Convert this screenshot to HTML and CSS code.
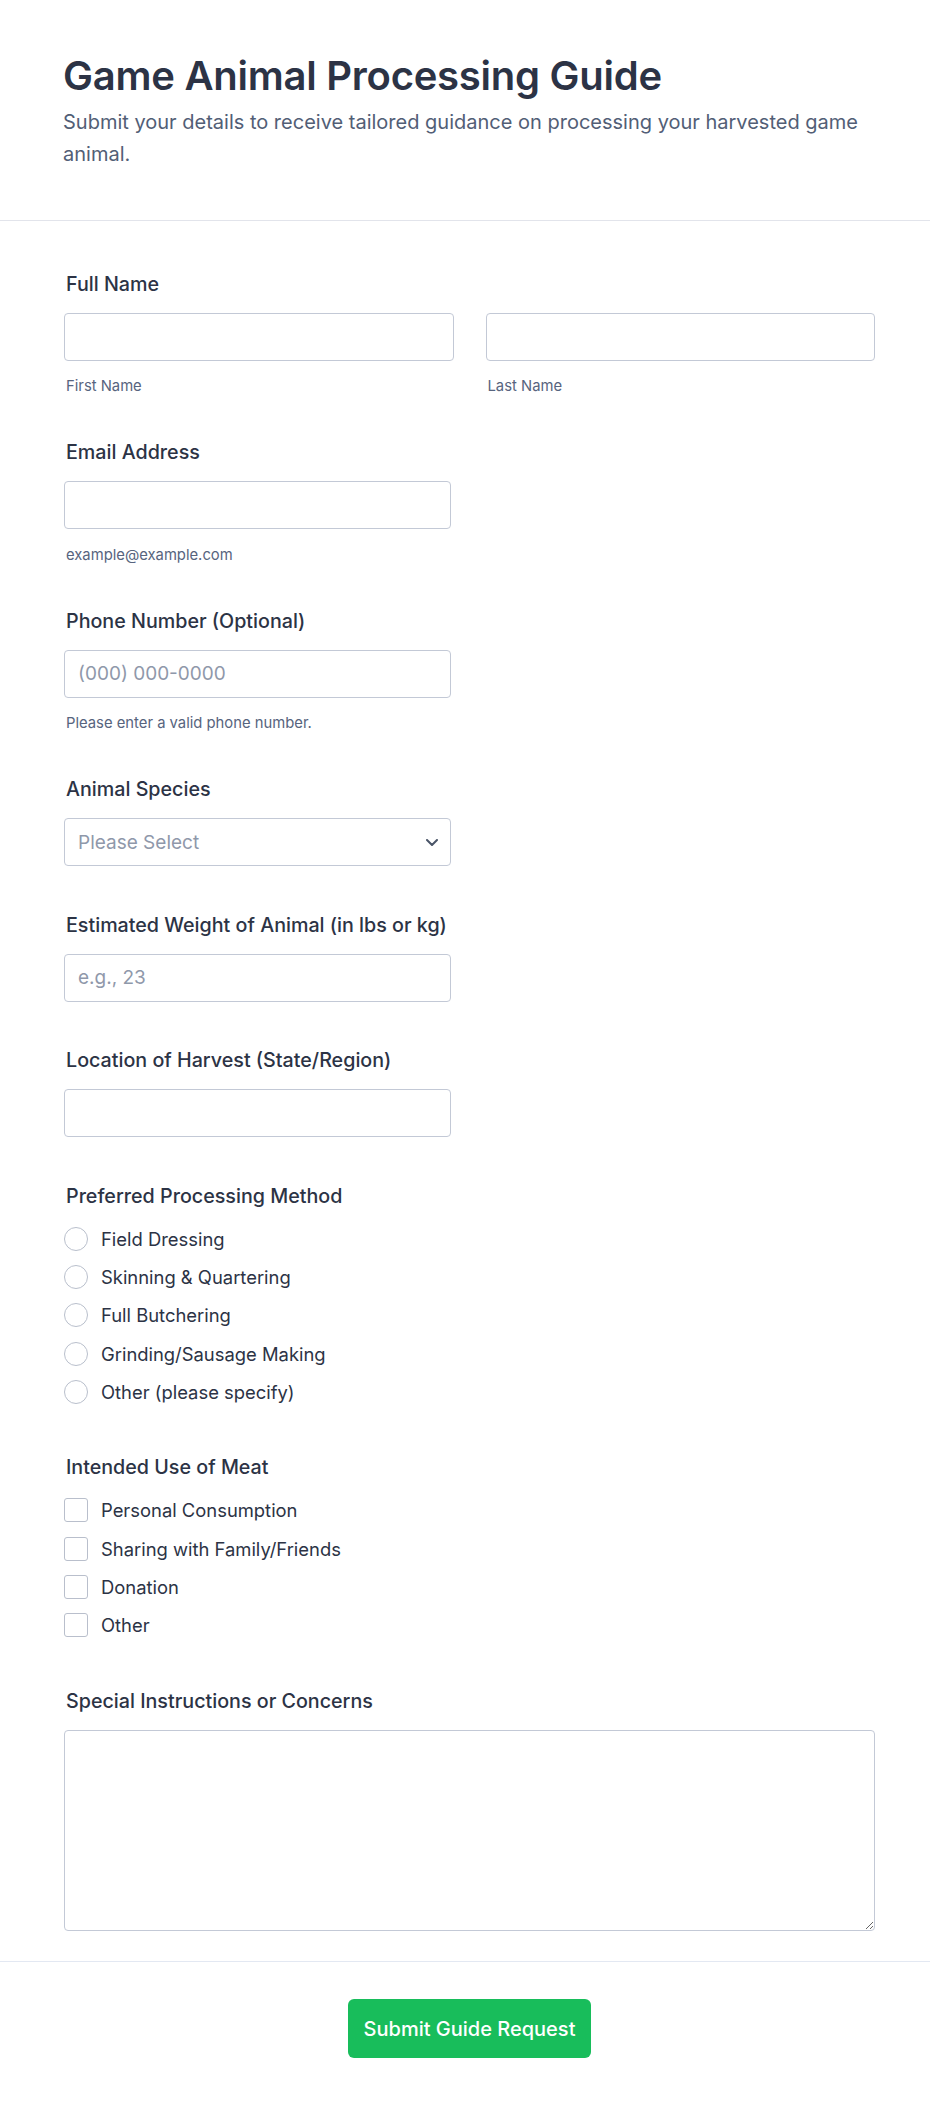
FILE: index.html
```html
<!DOCTYPE html>
<html lang="en">
<head>
<meta charset="utf-8">
<title>Game Animal Processing Guide</title>
<link rel="stylesheet" href="styles.css">
</head>
<body>
<header class="form-header">
  <h1 class="form-title">Game Animal Processing Guide</h1>
  <p class="form-desc">Submit your details to receive tailored guidance on processing your harvested game animal.</p>
</header>
<main class="form-body">
  <div class="field">
    <label class="field-label">Full Name</label>
    <div class="name-row">
      <div class="name-col">
        <input class="text-input" type="text">
        <span class="sublabel">First Name</span>
      </div>
      <div class="name-col">
        <input class="text-input" type="text">
        <span class="sublabel">Last Name</span>
      </div>
    </div>
  </div>
  <div class="field">
    <label class="field-label">Email Address</label>
    <input class="text-input half" type="email">
    <span class="sublabel">example@example.com</span>
  </div>
  <div class="field">
    <label class="field-label">Phone Number (Optional)</label>
    <input class="text-input half" type="tel" placeholder="(000) 000-0000">
    <span class="sublabel">Please enter a valid phone number.</span>
  </div>
  <div class="field">
    <label class="field-label">Animal Species</label>
    <div class="select-wrap half">
      <select class="select-input">
        <option>Please Select</option>
      </select>
      <svg class="chevron" width="12" height="7" viewBox="0 0 12 7" aria-hidden="true"><path d="M1 1 L6 6 L11 1" fill="none" stroke="#4a5568" stroke-width="2" stroke-linecap="round" stroke-linejoin="round"/></svg>
    </div>
  </div>
  <div class="field">
    <label class="field-label">Estimated Weight of Animal (in lbs or kg)</label>
    <input class="text-input half" type="text" placeholder="e.g., 23">
  </div>
  <div class="field">
    <label class="field-label">Location of Harvest (State/Region)</label>
    <input class="text-input half" type="text">
  </div>
  <div class="field">
    <label class="field-label">Preferred Processing Method</label>
    <div class="options">
      <label class="option"><input class="radio" type="radio" name="method"><span>Field Dressing</span></label>
      <label class="option"><input class="radio" type="radio" name="method"><span>Skinning &amp; Quartering</span></label>
      <label class="option"><input class="radio" type="radio" name="method"><span>Full Butchering</span></label>
      <label class="option"><input class="radio" type="radio" name="method"><span>Grinding/Sausage Making</span></label>
      <label class="option"><input class="radio" type="radio" name="method"><span>Other (please specify)</span></label>
    </div>
  </div>
  <div class="field">
    <label class="field-label">Intended Use of Meat</label>
    <div class="options">
      <label class="option"><input class="checkbox" type="checkbox"><span>Personal Consumption</span></label>
      <label class="option"><input class="checkbox" type="checkbox"><span>Sharing with Family/Friends</span></label>
      <label class="option"><input class="checkbox" type="checkbox"><span>Donation</span></label>
      <label class="option"><input class="checkbox" type="checkbox"><span>Other</span></label>
    </div>
  </div>
  <div class="field">
    <label class="field-label">Special Instructions or Concerns</label>
    <textarea class="textarea"></textarea>
  </div>
</main>
<footer class="form-footer">
  <button class="submit-btn" type="button">Submit Guide Request</button>
</footer>
</body>
</html>
```

FILE: styles.css
```css
* {
  box-sizing: border-box;
}

body {
  margin: 0;
  background: #ffffff;
  font-family: Inter, "Noto Sans", "Liberation Sans", sans-serif;
  color: #2c3345;
}

.form-header {
  padding: 52px 55px 50px 63px;
  border-bottom: 1px solid #e2e4eb;
}

.form-title {
  margin: 0;
  font-size: 40px;
  line-height: 48px;
  font-weight: 600;
  letter-spacing: -0.25px;
  color: #2c3345;
}

.form-desc {
  margin: 6px 0 0;
  font-size: 20px;
  line-height: 32px;
  color: #525e76;
}

.form-body {
  display: flex;
  flex-direction: column;
  gap: 46.5px;
  padding: 50.8px 55px 30.5px 64px;
}

.field {
  display: flex;
  flex-direction: column;
  align-items: flex-start;
}

.field-label {
  display: block;
  padding-left: 2px;
  margin-bottom: 17px;
  font-size: 19.7px;
  line-height: 24px;
  font-weight: 500;
  color: #2c3345;
}

.name-row {
  display: grid;
  grid-template-columns: 1fr 1fr;
  column-gap: 32px;
  width: 100%;
}

.name-col {
  display: flex;
  flex-direction: column;
}

.text-input,
.select-input {
  display: block;
  width: 100%;
  height: 48px;
  padding: 0 13px;
  border: 1px solid #c3c9d6;
  border-radius: 4px;
  background: #ffffff;
  font-family: inherit;
  font-size: 19px;
  color: #2c3345;
  outline: none;
}

.text-input::placeholder {
  color: #8f98aa;
}

.half {
  width: 387px;
}

.sublabel {
  display: block;
  padding-left: 2px;
  margin-top: 15.5px;
  margin-bottom: -2.5px;
  font-size: 14.8px;
  line-height: 20px;
  color: #57647e;
}

.select-wrap {
  position: relative;
}

.select-input {
  appearance: none;
  -webkit-appearance: none;
  color: #8f98aa;
}

.chevron {
  position: absolute;
  right: 13px;
  top: 21px;
  pointer-events: none;
}

.options {
  display: flex;
  flex-direction: column;
  gap: 10.3px;
  margin-bottom: 3px;
}

.option {
  display: flex;
  align-items: center;
  gap: 13px;
  height: 28px;
  font-size: 18.4px;
  line-height: 24px;
  color: #2c3345;
}

.radio,
.checkbox {
  appearance: none;
  -webkit-appearance: none;
  width: 24px;
  height: 24px;
  margin: 0;
  border: 1px solid #b9bfcc;
  background: #ffffff;
  flex: none;
}

.radio {
  border-radius: 50%;
}

.checkbox {
  border-radius: 3px;
}

.textarea {
  display: block;
  width: 100%;
  height: 201px;
  padding: 10px 14px;
  border: 1px solid #c3c9d6;
  border-radius: 4px;
  font-family: inherit;
  font-size: 18px;
  color: #2c3345;
  outline: none;
}

.form-footer {
  display: flex;
  justify-content: center;
  padding: 37px 55px 48px 64px;
  border-top: 1px solid #e3e8f2;
}

.submit-btn {
  height: 59px;
  padding: 0 16px;
  border: none;
  border-radius: 6px;
  background: #18bd5b;
  color: #ffffff;
  font-family: inherit;
  font-size: 20px;
  font-weight: 500;
  cursor: pointer;
}
```
